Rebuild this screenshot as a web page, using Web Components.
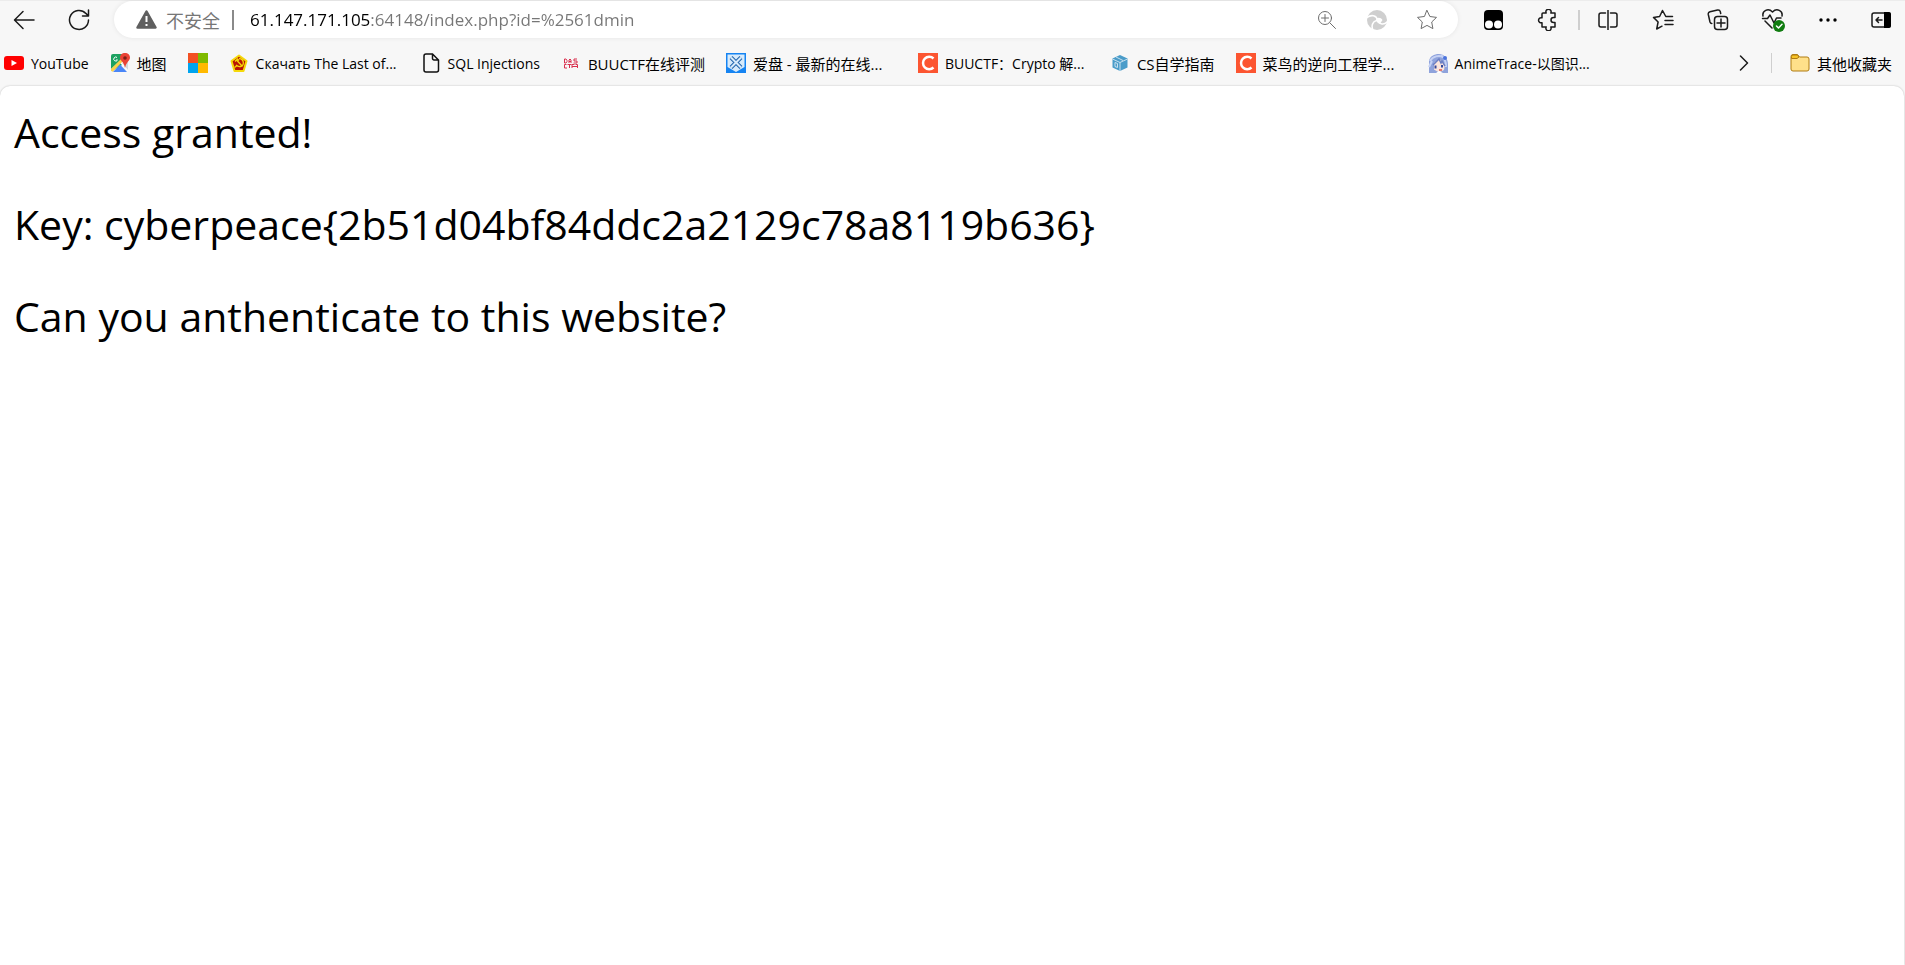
<!DOCTYPE html>
<html lang="zh-CN">
<head>
<meta charset="utf-8">
<title>61.147.171.105:64148/index.php?id=%2561dmin</title>
<style>
    html, body {
        height: 100%;
    }
    body {
        margin: 0;
        font-family: "Open Sans", "Noto Sans CJK SC", sans-serif;
        background-color: #f7f7f7;
        color: #000;
    }
</style>
</head>
<body>

<browser-window>
    <browser-toolbar slot="toolbar">
        <tool-button label="返回">
            <svg width="22" height="20" viewBox="0 0 22 20"><path d="M21 10H2M10 1.500L1.500 10l8.500 8.500" stroke-width="1.500"/></svg>
        </tool-button>
        <tool-button label="刷新">
            <svg width="22" height="22" viewBox="0 0 22 22"><path d="M20.500 11a9.500 9.500 0 1 1-2.600-6.600L20 6.500M20.500 1v6h-6" stroke-width="1.500"/></svg>
        </tool-button>

        <address-bar host="61.147.171.105" path=":64148/index.php?id=%2561dmin" status="不安全">
            <tool-button label="缩放" muted>
                <svg width="20" height="20" viewBox="0 0 20 20"><circle cx="8" cy="8" r="6.500"/><path d="M13 13l5.500 5.500M8 4.500v7M4.500 8h7"/></svg>
            </tool-button>
            <tool-button label="Edge" muted>
                <svg width="20" height="20" viewBox="0 0 20 20">
                    <circle cx="10" cy="10" r="10" fill="#cfcfcf" stroke="none"/>
                    <path d="M0 7.500C4 4.500 9.500 5 10.500 10M20 12c-3 3.500-7.500 2-9.500-.500M6 20c-2-4-.500-8.500 3.500-9.500" stroke="#fff" stroke-width="1.500"/>
                    <path d="M9 8.500c2.500-1.500 5-1 6.500 1.500l-2 3c-2.500 0-4-1.500-4.500-4.500z" fill="#fff" stroke="none"/>
                </svg>
            </tool-button>
            <tool-button label="将此页面添加到收藏夹" muted>
                <svg width="22" height="22" viewBox="0 0 22 22"><path d="M11 1.500l2.900 6 6.600.9-4.800 4.600 1.200 6.600-5.900-3.200-5.900 3.200 1.200-6.600L1.500 8.400l6.600-.9z"/></svg>
            </tool-button>
        </address-bar>

        <tool-button label="Tampermonkey">
            <svg width="20" height="20" viewBox="0 0 20 20"><rect x="1" y="0" width="19" height="20" rx="4" fill="#000" stroke="none"/><g fill="#fff" stroke="none"><circle cx="6" cy="14.500" r="4"/><circle cx="15" cy="14.500" r="4"/></g></svg>
        </tool-button>
        <tool-button label="扩展">
            <svg width="22" height="22" viewBox="0 0 22 22"><path d="M6 4h3.200a2.600 2.600 0 1 1 4.600 0H18v4.500h-1.500a2.500 2.500 0 0 0 0 5H18V18h-4.200a2.600 2.600 0 1 1-4.600 0H5v-4.300a2.600 2.600 0 1 1 0-4.900V5a1 1 0 0 1 1-1z" stroke-width="1.500"/></svg>
        </tool-button>
        <span class="divider"></span>
        <tool-button label="分屏">
            <svg width="20" height="20" viewBox="0 0 20 20"><path d="M7.500 3H3a2 2 0 0 0-2 2v10a2 2 0 0 0 2 2h4.500M12.500 3H17a2 2 0 0 1 2 2v10a2 2 0 0 1-2 2h-4.500M10 0v20" stroke-width="1.500"/></svg>
        </tool-button>
        <tool-button label="收藏夹">
            <svg width="22" height="22" viewBox="0 0 22 22"><path d="M20.500 7.500h-6.700L10.500 1.500l-2.900 6L1.500 8.400l4.600 4.600-1.400 7 5.300-2.800M13 11.500h8M13 15.500h8" stroke-width="1.500"/></svg>
        </tool-button>
        <tool-button label="集锦">
            <svg width="22" height="22" viewBox="0 0 22 22"><rect x="7.500" y="7.500" width="13" height="13" rx="3" stroke-width="1.500"/><path d="M14 10v8M10 14h8M4.800 14.500c-1 0-1.500-.5-1.800-1.500L1.300 5.500c-.3-1.500.3-2.400 1.700-2.800l7.500-1.700c1.500-.3 2.400.2 2.800 1.600l.4 1.900" stroke-width="1.500"/></svg>
        </tool-button>
        <tool-button label="浏览器概要">
            <svg width="24" height="24" viewBox="0 0 24 24"><path d="M2 8C1 3 7-.5 11.500 4 16-.5 22 3 21 8M11 20l-7-7M1.500 10.500h5L9 7l4 8 2.500-5H20" stroke-width="1.500"/><circle cx="18" cy="18" r="6" fill="#107c10" stroke="none"/><path d="M15.500 18l2 2 3.500-3.700" stroke="#fff" stroke-width="1.500"/></svg>
        </tool-button>
        <tool-button label="设置及其他">
            <svg width="18" height="4" viewBox="0 0 18 4"><g fill="#000" stroke="none"><circle cx="2" cy="2" r="1.700"/><circle cx="9" cy="2" r="1.700"/><circle cx="16" cy="2" r="1.700"/></g></svg>
        </tool-button>
        <tool-button label="侧边栏" compact>
            <svg width="20" height="16" viewBox="0 0 20 16"><rect x="1" y="1" width="18" height="14" rx="2" stroke-width="1.500"/><path d="M13 0h5a2 2 0 0 1 2 2v12a2 2 0 0 1-2 2h-5z" fill="#000" stroke="none"/><path d="M11 8H5M7.500 5.500L5 8l2.500 2.500" stroke-width="1.500"/></svg>
        </tool-button>
    </browser-toolbar>

    <favorites-bar slot="favorites">
        <bookmark-link href="#youtube" name="YouTube" small>
            <svg width="20" height="20" viewBox="0 0 20 20"><rect y="3" width="20" height="14" rx="3" fill="#f00"/><path d="M7.500 7l5.500 3-5.500 3z" fill="#fff"/></svg>
        </bookmark-link>
        <bookmark-link href="#maps" name="地图">
            <svg width="20" height="20" viewBox="0 0 20 20">
                <path d="M1 3a2 2 0 0 1 2-2h10l4 8-15 9H1z" fill="#1da261"/>
                <path d="M1 16L14 4l4 5v9l-8-8-8 9z" fill="#fff"/>
                <path d="M3 19l7-7.500 7 7.500z" fill="#4a86f7"/>
                <path d="M1 16L12 5l1 3L3 18.500C2 19 1 18 1 17z" fill="#fbd14b"/>
                <path d="M12 10l6 7V9z" fill="#d5d8db"/>
                <path d="M15 0c3 0 5 2 5 4.800 0 3-4 4.700-4.800 9.700h-.4C14.500 9.500 10 7.800 10 4.800 10 2 12 0 15 0z" fill="#ea4335"/>
                <circle cx="15" cy="5" r="1.800" fill="#7b1f17"/>
                <path d="M7 4.500A2 2 0 1 0 7.500 7H6" fill="none" stroke="#fff"/>
            </svg>
        </bookmark-link>
        <bookmark-link href="#microsoft" label="Microsoft">
            <svg width="20" height="20" viewBox="0 0 20 20"><path d="M0 0h10v10H0z" fill="#f25022"/><path d="M10 0h10v10H10z" fill="#7fba00"/><path d="M0 10h10v10H0z" fill="#00a4ef"/><path d="M10 10h10v10H10z" fill="#ffb900"/></svg>
        </bookmark-link>
        <bookmark-link href="#download" name="Скачать The Last of..." wide small>
            <svg width="20" height="20" viewBox="0 0 20 20"><path d="M10 2.500l7.500 5.500-3 10h-9L2.500 8z" fill="#b81405" stroke="#f5d90a" stroke-width="2" stroke-linejoin="round"/><path d="M10 5.500c5.500.5 5.500 7 1.500 8-2 .5-3.500-.5-4.500-1.500M6 8.500L8.500 6l1.500 1.500M8 7.500l5.500 6M5.500 14.500L7.500 13" fill="none" stroke="#f5d90a" stroke-width="1.300"/></svg>
        </bookmark-link>
        <bookmark-link href="#sql" name="SQL Injections" small>
            <svg width="20" height="20" viewBox="0 0 20 20" fill="none" stroke="#111" stroke-width="1.500"><path d="M11.500 1H5a2 2 0 0 0-2 2v14a2 2 0 0 0 2 2h10.500a2 2 0 0 0 2-2V7zM11.500 1v4.500A1.500 1.500 0 0 0 13 7h4.500"/></svg>
        </bookmark-link>
        <bookmark-link href="#buuctf" name="BUUCTF在线评测">
            <svg width="20" height="20" viewBox="0 0 20 20" fill="none" stroke="#d9304f"><path d="M3.500 6v4H5l1-1.500V7.500L5 6zM8 10V7l1-1 1 1v3M8 8.500h2M16 6h-3v2h3v2h-3.500M5.500 11.500h-2v3.500h2.500M6.500 11.500h4M8.500 11.500V15M11 15v-3.500h2.500M11 13.500h6M14.500 11.500h2V15"/></svg>
        </bookmark-link>
        <bookmark-link href="#aipan" name="爱盘 - 最新的在线..." wide>
            <svg width="20" height="20" viewBox="0 0 20 20"><path d="M0 0h20v20H0z" fill="#1684f2"/><path d="M1.500 1.500h17V14L10 19l-8.500-5z" fill="#d8ebfb"/><path d="M5 4.500l10 10M15 4.500l-10 10" fill="none" stroke="#2467ae" stroke-width="4"/><path d="M5 4.500l10 10M15 4.500l-10 10" stroke="#d8ebfb" stroke-width="2"/></svg>
        </bookmark-link>
        <bookmark-link href="#crypto" name="BUUCTF：Crypto 解..." wide small>
            <svg width="20" height="20" viewBox="0 0 20 20"><path d="M0 0h20v20H0z" fill="#fc5531"/><path d="M15.500 5.500A6.200 6.200 0 1 0 15.500 14.500" fill="none" stroke="#fff" stroke-width="2.500"/></svg>
        </bookmark-link>
        <bookmark-link href="#csdiy" name="CS自学指南">
            <svg width="20" height="20" viewBox="0 0 20 20"><path d="M10 2l7.500 3.500v9L10 18l-7.500-3.500v-9z" fill="#4a9cc9"/><path d="M2.500 6L10 9.500 17.500 6M10 9.500V18M6 4l7 3.500" fill="none" stroke="#c7e1f0"/><path d="M5 9.500v4l2.500 1v-4z" fill="none" stroke="#c7e1f0"/></svg>
        </bookmark-link>
        <bookmark-link href="#reverse" name="菜鸟的逆向工程学..." wide>
            <svg width="20" height="20" viewBox="0 0 20 20"><path d="M0 0h20v20H0z" fill="#fc5531"/><path d="M15.500 5.500A6.200 6.200 0 1 0 15.500 14.500" fill="none" stroke="#fff" stroke-width="2.500"/></svg>
        </bookmark-link>
        <bookmark-link href="#animetrace" name="AnimeTrace-以图识..." wide small>
            <svg width="20" height="20" viewBox="0 0 20 20">
                <path d="M1 20V8C2 3 6 1 11 1s9 5 9 10v9z" fill="#8fa3dc"/>
                <path d="M2 8c3-5 9-6 13-4M13 2c3 2 5 6 5 12M1 14l3-6" fill="none" stroke="#c6d2f4" stroke-width="2"/>
                <path d="M6 10l5-4 6 5-1 6-5 2.500-5-3z" fill="#fbe5dc"/>
                <path d="M5 12l6-6 2 4 1-2 3 5" fill="none" stroke="#6b7fc4" stroke-width="1.500"/>
                <path d="M7.500 12.500v3M14 12v2.500" stroke="#34499c" stroke-width="2"/>
                <path d="M11 17h3" stroke="#d8574d" stroke-width="1.500"/>
                <path d="M8 20l3-2 4 2z" fill="#fff"/>
                <circle cx="17" cy="5" r="2" fill="#4c74dd"/>
            </svg>
        </bookmark-link>
        <svg slot="folder" width="20" height="20" viewBox="0 0 20 20"><path d="M1 3.500A2 2 0 0 1 3 1.500h4.500L9.500 4H17a2 2 0 0 1 2 2v10a2 2 0 0 1-2 2H3a2 2 0 0 1-2-2z" fill="#ffe08a" stroke="#b07d12"/><path d="M1.500 5.500h5.500L9 4 7.500 2H3a1.500 1.500 0 0 0-1.500 1.500z" fill="#f7c325" stroke="#b07d12"/></svg>
    </favorites-bar>

    <page-view>
        <p>Access granted!</p>
        <p>Key: cyberpeace{2b51d04bf84ddc2a2129c78a8119b636}</p>
        <p>Can you anthenticate to this website?</p>
    </page-view>
</browser-window>

<script>
class BrowserWindow extends HTMLElement {
    constructor() {
        super();
        const shadow = this.attachShadow({ mode: 'open' });
        shadow.innerHTML = `
            <style>
                :host {
                    display: flex;
                    flex-direction: column;
                    min-height: 100%;
                }
            </style>
            <slot name="toolbar"></slot>
            <slot name="favorites"></slot>
            <slot></slot>
        `;
    }
}

class BrowserToolbar extends HTMLElement {
    constructor() {
        super();
        const shadow = this.attachShadow({ mode: 'open' });
        shadow.innerHTML = `
            <style>
                :host {
                    display: flex;
                    align-items: center;
                    gap: 15px;
                    padding: 1px 6px 2px 4px;
                    box-shadow: inset 0 1px #ececec;
                }
                ::slotted(address-bar) {
                    flex: 1;
                }
                ::slotted(.divider) {
                    width: 2px;
                    height: 20px;
                    margin: 0 -7px 0 -5px;
                    background-color: #cfcfcf;
                }
            </style>
            <slot></slot>
        `;
    }
}

class ToolButton extends HTMLElement {
    constructor() {
        super();
        const shadow = this.attachShadow({ mode: 'open' });
        shadow.innerHTML = `
            <style>
                :host {
                    display: block;
                    flex: none;
                }
                button {
                    display: flex;
                    align-items: center;
                    justify-content: center;
                    width: 40px;
                    height: 32px;
                    padding: 0;
                    border: 0;
                    border-radius: 4px;
                    background: none;
                }
                button:hover {
                    background-color: #e8e8e8;
                }
                :host([compact]) button {
                    width: 36px;
                }
                ::slotted(svg) {
                    fill: none;
                    stroke: #1b1b1b;
                    stroke-linecap: round;
                    stroke-linejoin: round;
                }
                :host([muted]) ::slotted(svg) {
                    stroke: #6e6e6e;
                }
            </style>
            <button type="button"><slot></slot></button>
        `;
    }

    connectedCallback() {
        this.shadowRoot.querySelector('button').setAttribute('aria-label', this.getAttribute('label') || '');
    }
}

class AddressBar extends HTMLElement {
    constructor() {
        super();
        const shadow = this.attachShadow({ mode: 'open' });
        shadow.innerHTML = `
            <style>
                :host {
                    display: flex;
                    align-items: center;
                    min-width: 0;
                    height: 37px;
                    padding: 0 11px 0 22px;
                    box-sizing: border-box;
                    border-radius: 19px;
                    background-color: #fff;
                    box-shadow: 0 0 5px rgba(0, 0, 0, 0.08);
                }
                .security {
                    display: flex;
                    align-items: center;
                    gap: 9px;
                    padding: 0;
                    border: 0;
                    background: none;
                    font: inherit;
                    font-size: 18px;
                    color: #767676;
                }
                .separator {
                    width: 2px;
                    height: 20px;
                    margin: 0 16px 0 12px;
                    background-color: #8a8a8a;
                }
                input {
                    flex: 1;
                    min-width: 0;
                    padding: 0;
                    border: 0;
                    outline: 0;
                    font: inherit;
                    font-size: 17px;
                    color: #767676;
                    background: linear-gradient(90deg, #000 var(--host-width), #767676 var(--host-width));
                    -webkit-background-clip: text;
                    background-clip: text;
                    -webkit-text-fill-color: transparent;
                }
                .actions {
                    display: flex;
                    gap: 10px;
                }
            </style>
            <button class="security" type="button">
                <svg width="21" height="19" viewBox="0 0 21 19">
                    <path d="M10.500 1.500L19.500 17.500H1.500z" fill="#5f5f5f" stroke="#5f5f5f" stroke-width="2.500" stroke-linejoin="round"/>
                    <path d="M10.500 6v6M10.500 14v2" stroke="#fff" stroke-width="2"/>
                </svg>
                <span></span>
            </button>
            <span class="separator"></span>
            <input type="text" aria-label="地址和搜索栏" spellcheck="false">
            <div class="actions"><slot></slot></div>
        `;
    }

    connectedCallback() {
        const host = this.getAttribute('host') || '';
        const input = this.shadowRoot.querySelector('input');
        this.shadowRoot.querySelector('.security span').textContent = this.getAttribute('status');
        input.value = host.concat(this.getAttribute('path') || '');

        // the host part is black, the rest of the address is grey
        const style = getComputedStyle(input);
        const context = document.createElement('canvas').getContext('2d');
        context.font = `${style.fontSize} ${style.fontFamily}`;
        input.style.setProperty('--host-width', `${Math.round(context.measureText(host).width)}px`);
    }
}

class FavoritesBar extends HTMLElement {
    constructor() {
        super();
        const shadow = this.attachShadow({ mode: 'open' });
        shadow.innerHTML = `
            <style>
                :host {
                    display: flex;
                    align-items: center;
                    height: 46px;
                    padding: 0 13px 0 4px;
                    font-size: 15px;
                }
                nav {
                    display: flex;
                    align-items: center;
                    gap: 21px;
                    flex: 1;
                    min-width: 0;
                    overflow: hidden;
                }
                button {
                    display: flex;
                    align-items: center;
                    gap: 7px;
                    padding: 0;
                    border: 0;
                    background: none;
                    font: inherit;
                    color: inherit;
                    white-space: nowrap;
                }
                .divider {
                    width: 1px;
                    height: 20px;
                    margin: 0 18px 0 22px;
                    background-color: #cfcfcf;
                }
            </style>
            <nav aria-label="收藏夹栏"><slot></slot></nav>
            <button type="button" aria-label="更多收藏夹">
                <svg width="10" height="16" viewBox="0 0 10 16" fill="none" stroke="#1b1b1b" stroke-width="1.500" stroke-linecap="round" stroke-linejoin="round"><path d="M1.500 1L8.500 8l-7 7"/></svg>
            </button>
            <span class="divider"></span>
            <button type="button"><slot name="folder"></slot><span>其他收藏夹</span></button>
        `;
    }
}

class BookmarkLink extends HTMLElement {
    constructor() {
        super();
        const shadow = this.attachShadow({ mode: 'open' });
        shadow.innerHTML = `
            <style>
                :host {
                    display: block;
                    flex: none;
                }
                :host([wide]) {
                    width: 171px;
                }
                :host([small]) {
                    font-size: 14px;
                }
                a {
                    display: flex;
                    align-items: center;
                    gap: 7px;
                    color: inherit;
                    text-decoration: none;
                    white-space: nowrap;
                }
                ::slotted(svg) {
                    flex: none;
                }
                span:empty {
                    display: none;
                }
            </style>
            <a><slot></slot><span></span></a>
        `;
    }

    connectedCallback() {
        const link = this.shadowRoot.querySelector('a');
        link.href = this.getAttribute('href') || '#';
        link.querySelector('span').textContent = this.getAttribute('name') || '';
        if (this.hasAttribute('label')) {
            link.setAttribute('aria-label', this.getAttribute('label'));
        }
    }
}

class PageView extends HTMLElement {
    constructor() {
        super();
        const shadow = this.attachShadow({ mode: 'open' });
        shadow.innerHTML = `
            <style>
                :host {
                    display: flex;
                    flex-direction: column;
                    flex: 1;
                    gap: 40px;
                    margin-right: 1px;
                    padding: 20px 14px;
                    border-radius: 10px 10px 0 0;
                    background-color: #fff;
                    box-shadow: 0 0 2px rgba(0, 0, 0, 0.25);
                    font-size: 41px;
                    line-height: 52px;
                }
                ::slotted(p) {
                    margin: 0;
                }
            </style>
            <slot></slot>
        `;
    }
}

customElements.define('browser-window', BrowserWindow);
customElements.define('browser-toolbar', BrowserToolbar);
customElements.define('tool-button', ToolButton);
customElements.define('address-bar', AddressBar);
customElements.define('favorites-bar', FavoritesBar);
customElements.define('bookmark-link', BookmarkLink);
customElements.define('page-view', PageView);
</script>
</body>
</html>
